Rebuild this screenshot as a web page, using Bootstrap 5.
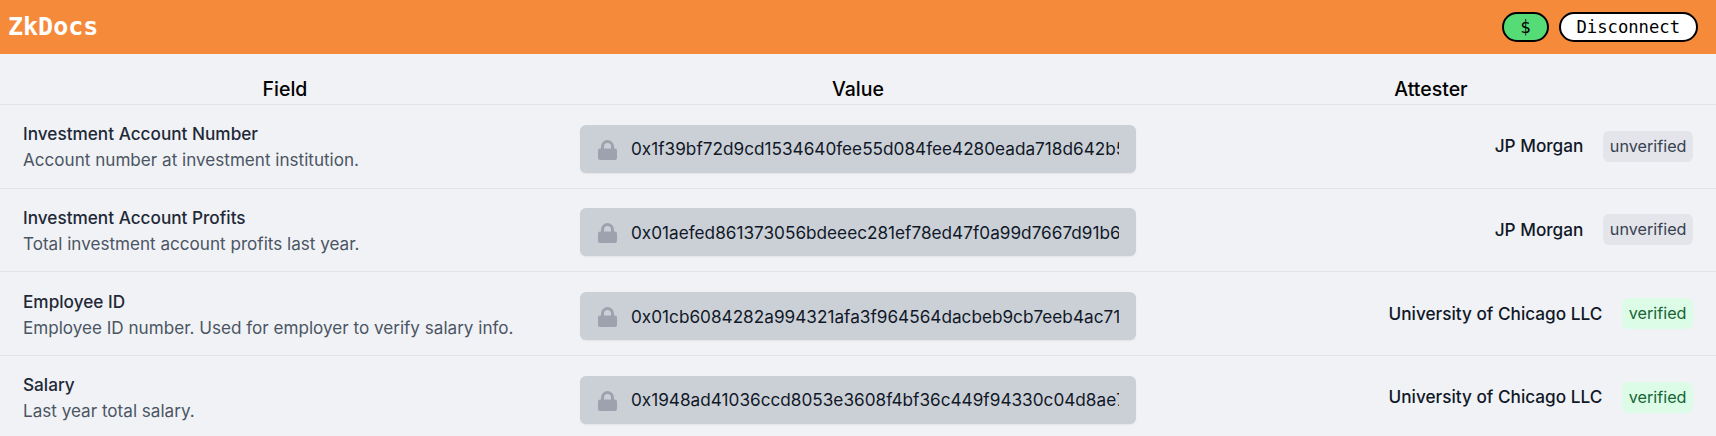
<!DOCTYPE html>
<html lang="en">
<head>
  <meta charset="UTF-8" />
  <title>ZkDocs</title>
  <link href="https://cdn.jsdelivr.net/npm/bootstrap@5.3.2/dist/css/bootstrap.min.css" rel="stylesheet">
  <style>
    body {
      background: #f0f2f6;
      font-family: Inter, "Liberation Sans", sans-serif;
      color: #111827;
      overflow: hidden;
    }
    .top-bar {
      background: #f58a3b;
      height: 54px;
      padding: 0 18px 0 8px;
    }
    .brand-name {
      font-family: "DejaVu Sans Mono", monospace;
      font-size: 25px;
      font-weight: 700;
      color: #fff;
    }
    .pill-btn {
      font-family: "DejaVu Sans Mono", monospace;
      font-size: 17.2px;
      line-height: 24px;
      height: 30px;
      padding: 0 16px;
      border: 2px solid #000;
      border-radius: 15px;
      color: #000;
      background: #fff;
    }
    .pill-money {
      background: #56dc77;
    }
    .btn-gap {
      gap: 10px;
    }
    .docs-table {
      --bs-table-bg: transparent;
      --bs-table-border-color: #e2e4ea;
      table-layout: fixed;
      margin: 0;
    }
    .docs-table th {
      font-size: 19.5px;
      font-weight: 500;
      line-height: 24px;
      text-align: center;
      color: #000;
      padding: 23px 0 3px;
    }
    .docs-table td {
      padding: 16.33px 23px 14.33px;
      vertical-align: middle;
    }
    .col-field { width: 570px; }
    .col-value { width: 576px; }
    .field-title {
      font-size: 17.2px;
      font-weight: 500;
      line-height: 26px;
      color: #1f2937;
    }
    .field-desc {
      font-size: 17.1px;
      line-height: 26px;
      color: #4b5563;
    }
    .docs-table td.cell-value {
      padding: 5px 10px 0;
    }
    .hash-input.form-control {
      height: 48px;
      padding: 0 17px 0 51px;
      background: #cbd0d7;
      border: 0;
      border-radius: 6px;
      box-shadow: 0 1px 2px rgba(0, 0, 0, .06);
      font-size: 17.2px;
      color: #111827;
    }
    .lock-mark {
      left: 18px;
      top: 15px;
      width: 19px;
      height: 20px;
      z-index: 5;
    }
    .attester-cell {
      gap: 20px;
      margin-top: -2px;
    }
    .attester-name {
      font-size: 17.2px;
      font-weight: 500;
      color: #111827;
    }
    .state-tag {
      font-size: 16.2px;
      line-height: 25px;
      padding: 3px 6.5px;
      border-radius: 6px;
    }
    .state-open {
      background: #e3e5ea;
      color: #374151;
    }
    .state-ok {
      background: #dcfce7;
      color: #166534;
    }
  </style>
</head>
<body>
  <svg class="d-none">
    <symbol id="lockShape" viewBox="0 0 19 20">
      <path fill="#9ca3af" d="M3 9V6.500a6.500 6.500 0 0 1 13 0V9h-3V6.500a3.500 3.500 0 0 0-7 0V9z"/>
      <rect y="8.500" width="19" height="11.500" rx="2" fill="#9ca3af"/>
    </symbol>
  </svg>

  <nav class="top-bar d-flex align-items-center justify-content-between">
    <span class="brand-name">ZkDocs</span>
    <div class="d-flex align-items-center btn-gap">
      <button type="button" class="btn pill-btn pill-money">$</button>
      <button type="button" class="btn pill-btn">Disconnect</button>
    </div>
  </nav>

  <table class="table docs-table">
    <colgroup>
      <col class="col-field">
      <col class="col-value">
      <col>
    </colgroup>
    <thead>
      <tr><th>Field</th><th>Value</th><th>Attester</th></tr>
    </thead>
    <tbody>
      <tr>
        <td>
          <div class="field-title">Investment Account Number</div>
          <div class="field-desc">Account number at investment institution.</div>
        </td>
        <td class="cell-value">
          <div class="position-relative">
            <svg class="lock-mark position-absolute"><use href="#lockShape"/></svg>
            <input class="form-control hash-input" readonly value="0x1f39bf72d9cd1534640fee55d084fee4280eada718d642b5a1c3">
          </div>
        </td>
        <td>
          <div class="d-flex justify-content-end align-items-center attester-cell">
            <span class="attester-name">JP Morgan</span>
            <span class="state-tag state-open">unverified</span>
          </div>
        </td>
      </tr>
      <tr>
        <td>
          <div class="field-title">Investment Account Profits</div>
          <div class="field-desc">Total investment account profits last year.</div>
        </td>
        <td class="cell-value">
          <div class="position-relative">
            <svg class="lock-mark position-absolute"><use href="#lockShape"/></svg>
            <input class="form-control hash-input" readonly value="0x01aefed861373056bdeeec281ef78ed47f0a99d7667d91b6e2f4">
          </div>
        </td>
        <td>
          <div class="d-flex justify-content-end align-items-center attester-cell">
            <span class="attester-name">JP Morgan</span>
            <span class="state-tag state-open">unverified</span>
          </div>
        </td>
      </tr>
      <tr>
        <td>
          <div class="field-title">Employee ID</div>
          <div class="field-desc">Employee ID number. Used for employer to verify salary info.</div>
        </td>
        <td class="cell-value">
          <div class="position-relative">
            <svg class="lock-mark position-absolute"><use href="#lockShape"/></svg>
            <input class="form-control hash-input" readonly value="0x01cb6084282a994321afa3f964564dacbeb9cb7eeb4ac71d90e2">
          </div>
        </td>
        <td>
          <div class="d-flex justify-content-end align-items-center attester-cell">
            <span class="attester-name">University of Chicago LLC</span>
            <span class="state-tag state-ok">verified</span>
          </div>
        </td>
      </tr>
      <tr>
        <td>
          <div class="field-title">Salary</div>
          <div class="field-desc">Last year total salary.</div>
        </td>
        <td class="cell-value">
          <div class="position-relative">
            <svg class="lock-mark position-absolute"><use href="#lockShape"/></svg>
            <input class="form-control hash-input" readonly value="0x1948ad41036ccd8053e3608f4bf36c449f94330c04d8ae72b1c6">
          </div>
        </td>
        <td>
          <div class="d-flex justify-content-end align-items-center attester-cell">
            <span class="attester-name">University of Chicago LLC</span>
            <span class="state-tag state-ok">verified</span>
          </div>
        </td>
      </tr>
    </tbody>
  </table>

  <script src="https://cdn.jsdelivr.net/npm/bootstrap@5.3.2/dist/js/bootstrap.bundle.min.js"></script>
</body>
</html>
